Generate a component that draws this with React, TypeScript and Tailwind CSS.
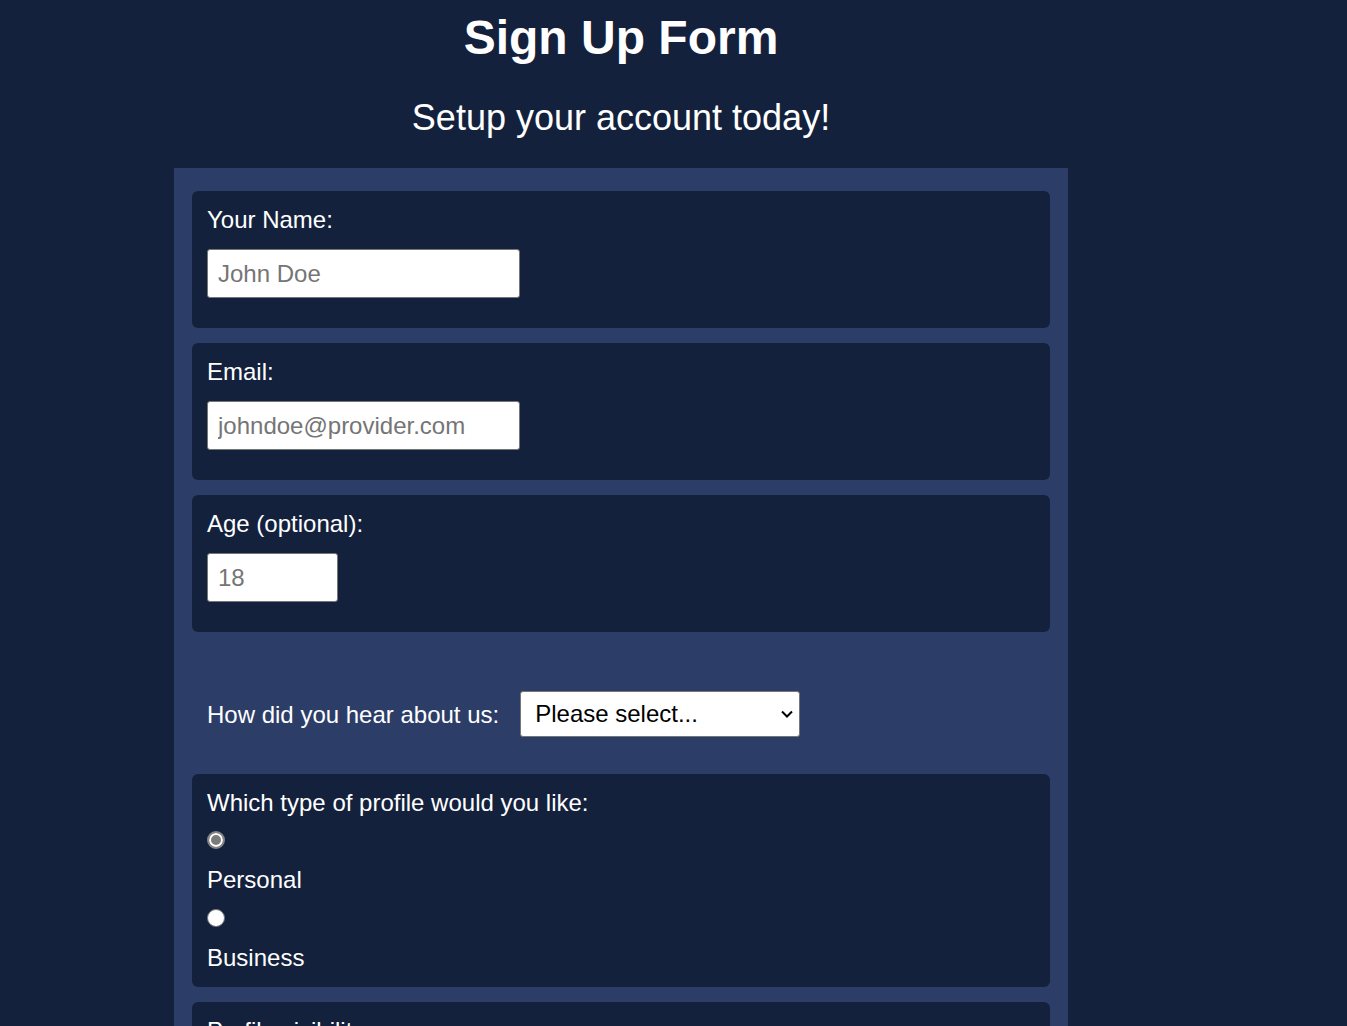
import { useState } from "react";

const inputCls =
  "mt-[15px] block h-[49px] rounded-[3px] border border-[#767676] bg-white px-[10px] text-[24px] text-black outline-none placeholder:text-[#757575]";

const radioCls =
  "block w-[18px] h-[18px] appearance-none rounded-full border border-[#767676] bg-white checked:border-2 checked:border-[#858585] checked:bg-[#7b7b7b] checked:shadow-[inset_0_0_0_2px_white]";

export default function App() {
  const [profile, setProfile] = useState("personal");
  const [visibility, setVisibility] = useState("public");

  return (
    <div className="min-h-screen bg-[#14213d] text-white font-['Liberation_Sans',Arial,sans-serif]">
      <div className="ml-[174px] w-[894px] pt-[10px]">
        <h1 className="text-center text-[48px] font-bold leading-[56px]">Sign Up Form</h1>
        <p className="mt-[32px] text-center text-[36px] leading-[40px]">Setup your account today!</p>

        <form className="mt-[30px] bg-[#2c3e67] px-[18px] pt-[23px] pb-[30px]">
          <div className="mb-[15px] rounded-[6px] bg-[#14213d] px-[15px] pt-[15px] pb-[30px]">
            <label htmlFor="name" className="block text-[24px] leading-[28px]">Your Name:</label>
            <input id="name" type="text" placeholder="John Doe" className={`${inputCls} w-[313px]`} />
          </div>

          <div className="mb-[15px] rounded-[6px] bg-[#14213d] px-[15px] pt-[15px] pb-[30px]">
            <label htmlFor="email" className="block text-[24px] leading-[28px]">Email:</label>
            <input id="email" type="email" placeholder="johndoe@provider.com" className={`${inputCls} w-[313px]`} />
          </div>

          <div className="mb-[15px] rounded-[6px] bg-[#14213d] px-[15px] pt-[15px] pb-[30px]">
            <label htmlFor="age" className="block text-[24px] leading-[28px]">Age (optional):</label>
            <input id="age" type="number" placeholder="18" className={`${inputCls} w-[131px]`} />
          </div>

          <div className="mb-[15px] flex items-center gap-[21px] px-[15px] pt-[44px] pb-[22px]">
            <label htmlFor="source" className="pt-[2px] text-[24px] leading-[28px]">How did you hear about us:</label>
            <div className="relative">
              <select
                id="source"
                defaultValue=""
                className="block h-[46px] w-[280px] appearance-none rounded-[3px] border border-[#767676] bg-white pl-[14px] text-[24px] text-black outline-none"
              >
                <option value="" disabled>Please select...</option>
                <option value="friend">A friend</option>
                <option value="search">Search engine</option>
                <option value="social">Social media</option>
              </select>
              <svg
                className="pointer-events-none absolute right-[7px] top-1/2 h-[8px] w-[12px] -translate-y-1/2"
                viewBox="0 0 12 8"
                fill="none"
                stroke="black"
                strokeWidth={2}
              >
                <path d="M1 1.5l5 5 5-5" />
              </svg>
            </div>
          </div>

          <div className="mb-[15px] rounded-[6px] bg-[#14213d] px-[15px] pt-[15px] pb-[15px]">
            <p className="text-[24px] leading-[28px]">Which type of profile would you like:</p>
            <input
              id="personal"
              type="radio"
              name="profile"
              checked={profile === "personal"}
              onChange={() => setProfile("personal")}
              className={`${radioCls} mt-[14px]`}
            />
            <label htmlFor="personal" className="mt-[17px] block text-[24px] leading-[28px]">Personal</label>
            <input
              id="business"
              type="radio"
              name="profile"
              checked={profile === "business"}
              onChange={() => setProfile("business")}
              className={`${radioCls} mt-[15px]`}
            />
            <label htmlFor="business" className="mt-[17px] block text-[24px] leading-[28px]">Business</label>
          </div>

          <div className="rounded-[6px] bg-[#14213d] px-[15px] pt-[15px] pb-[15px]">
            <p className="text-[24px] leading-[28px]">Profile visibility:</p>
            <input
              id="public"
              type="radio"
              name="visibility"
              checked={visibility === "public"}
              onChange={() => setVisibility("public")}
              className={`${radioCls} mt-[14px]`}
            />
            <label htmlFor="public" className="mt-[17px] block text-[24px] leading-[28px]">Public</label>
            <input
              id="private"
              type="radio"
              name="visibility"
              checked={visibility === "private"}
              onChange={() => setVisibility("private")}
              className={`${radioCls} mt-[15px]`}
            />
            <label htmlFor="private" className="mt-[17px] block text-[24px] leading-[28px]">Private</label>
          </div>
        </form>
      </div>
    </div>
  );
}
